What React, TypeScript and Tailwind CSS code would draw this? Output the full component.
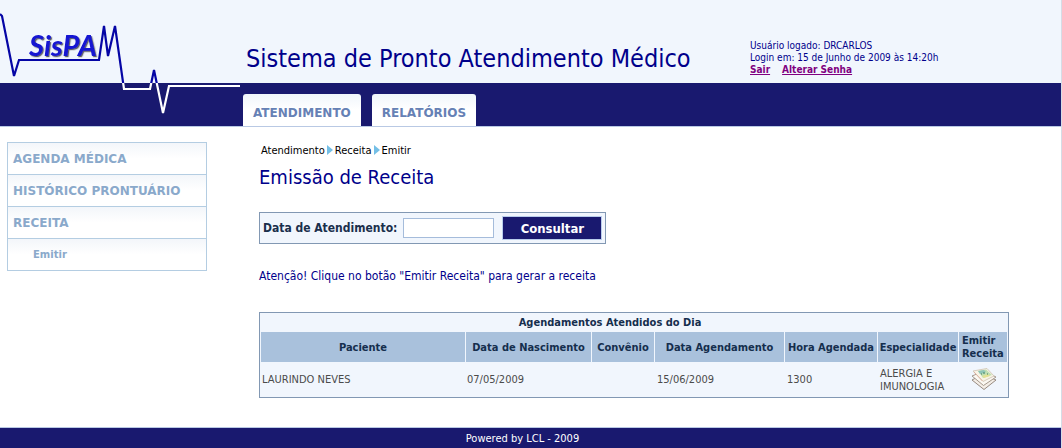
import React from "react";

const ECG_PATH =
  "M0 14 L2 16 L14 76 L19 60 H99 L104 26 L108 56 L115 26 L124 89 H150 L154 70 L163 113 L169 86 H240";

function Logo() {
  return (
    <svg
      viewBox="0 0 240 126"
      className="block h-[126px] w-60 shrink-0"
      role="img"
      aria-label="SisPA"
    >
      <defs>
        <clipPath id="logo-light">
          <rect x="0" y="0" width="240" height="83" />
        </clipPath>
        <clipPath id="logo-dark">
          <rect x="0" y="83" width="240" height="43" />
        </clipPath>
        <filter id="logo-shadow" x="-10%" y="-10%" width="130%" height="130%">
          <feDropShadow dx="1.2" dy="1.2" stdDeviation="0.7" floodColor="#222" floodOpacity="0.7" />
        </filter>
      </defs>
      <g fill="none" strokeWidth="2.2" strokeLinejoin="miter" strokeMiterlimit="2">
        <path d={ECG_PATH} stroke="#0505a5" clipPath="url(#logo-light)" />
        <path d={ECG_PATH} stroke="#ffffff" clipPath="url(#logo-dark)" />
      </g>
      <text
        x="29"
        y="56"
        fill="#1212d2"
        filter="url(#logo-shadow)"
        className="font-['Lato',sans-serif] text-[29px] font-bold italic"
      >
        SisPA
      </text>
    </svg>
  );
}

function PapersIcon() {
  return (
    <svg viewBox="0 0 26 24" className="block h-6 w-[26px]" aria-hidden="true">
      <g strokeWidth="0.9" strokeLinejoin="round">
        <path d="M2 12 L13 6 L26 12 L14 21.5 Z" fill="#f3ede6" stroke="#8c7f74" />
        <path d="M2 8 L14 3 L26 9 L13.5 17.5 Z" fill="#fbf8f2" stroke="#9c8e82" />
        <path d="M3 3 L17 0.5 L24 8 L13 13.5 Z" fill="#f8f4e6" stroke="#d3c7b8" />
      </g>
      <path d="M8 3 L16 1.5 L22 7 L13 10 Z" fill="#c0dfb2" />
      <path d="M8 3 L14 2 L16 4 L10 6 Z" fill="#8fc5b8" />
      <path d="M12 8 L18 6 L20 8 L14 10 Z" fill="#e4e294" />
      <path d="M13 5 h2 M17 6 h1 M11 6 h1" stroke="#3d7f66" strokeWidth="1" />
      <path d="M4 4 L12.5 13" stroke="#e0aa98" strokeWidth="0.8" />
    </svg>
  );
}

function Crumb() {
  return (
    <svg viewBox="0 0 6 10" className="mx-[2px] h-2.5 w-1.5 -translate-y-px" aria-hidden="true">
      <path d="M0 0 L6 5 L0 10 Z" fill="#74bfe6" />
    </svg>
  );
}

const tabs = ["ATENDIMENTO", "RELATÓRIOS"];
const menu = ["AGENDA MÉDICA", "HISTÓRICO PRONTUÁRIO", "RECEITA"];
const columns = [
  "Paciente",
  "Data de Nascimento",
  "Convênio",
  "Data Agendamento",
  "Hora Agendada",
  "Especialidade",
];

export default function App() {
  return (
    <div className="flex min-h-screen flex-col border-r border-[#d5dce6] bg-white font-['DejaVu_Sans_Condensed','DejaVu_Sans',sans-serif] text-[11px] leading-[13px]">
      <header className="flex border-b border-[#b9c9e4] bg-[linear-gradient(#f1f6fd_83px,#19196f_83px)]">
        <Logo />
        <div className="flex min-w-0 flex-1 flex-col">
          <div className="flex h-[83px] items-end text-[#00008b]">
            <h1 className="w-[510px] pb-2 pl-1.5 text-[25px] leading-8 whitespace-nowrap">
              Sistema de Pronto Atendimento Médico
            </h1>
            <div className="pb-[7px] text-[10px] leading-3 whitespace-nowrap">
              <p>Usuário logado: DRCARLOS</p>
              <p>Login em: 15 de Junho de 2009 às 14:20h</p>
              <p className="flex gap-3 font-bold text-[#800080]">
                <a href="#sair" className="underline">Sair</a>
                <a href="#senha" className="underline">Alterar Senha</a>
              </p>
            </div>
          </div>
          <nav className="flex flex-1 items-end gap-[11px] pl-[3px]">
            {tabs.map((t) => (
              <a
                key={t}
                href="#tab"
                className="flex h-8 items-center rounded-t-[3px] bg-linear-to-b from-[#f0f5fb] to-white to-50% px-[10px] pt-[7px] font-['DejaVu_Sans',sans-serif] text-[12px] font-bold text-[#6681b5]"
              >
                {t}
              </a>
            ))}
          </nav>
        </div>
      </header>

      <div className="flex flex-1 items-start">
        <aside className="mt-[15px] ml-[7px] w-50 shrink-0 border border-b-0 border-[#b4cde2] font-['DejaVu_Sans',sans-serif] font-bold text-[#8aa9cb]">
          {menu.map((m) => (
            <a
              key={m}
              href="#menu"
              className="flex h-8 items-center border-b border-[#b4cde2] bg-linear-to-b from-[#f3f6fa] to-white to-50% px-[5px] pt-px text-[12px]"
            >
              {m}
            </a>
          ))}
          <a
            href="#emitir"
            className="flex h-8 items-center border-b border-[#b4cde2] bg-linear-to-b from-[#f3f6fa] to-white to-50% pl-[25px] text-[10px]"
          >
            Emitir
          </a>
        </aside>

        <main className="ml-[52px] w-[750px] pt-[17px] pb-[29px] text-[#00008b]">
          <div className="flex items-center pl-[2px] text-black">
            Atendimento
            <Crumb />
            Receita
            <Crumb />
            Emitir
          </div>
          <h2 className="mt-2 text-[20px] leading-6">Emissão de Receita</h2>

          <form
            onSubmit={(e) => e.preventDefault()}
            className="mt-[23px] flex h-8 w-fit items-center border border-[#8298b3] bg-[#f1f6fd] px-[3px] text-[12px] font-bold text-[#1a2f4c]"
          >
            <label htmlFor="data" className="whitespace-nowrap">Data de Atendimento:</label>
            <input
              id="data"
              type="text"
              className="ml-[6px] h-5 w-[91px] border border-[#a5bcdb] bg-white px-1 font-normal"
            />
            <button type="submit" className="ml-2 h-6 w-[100px] border border-[#b9cdec] bg-[#19196f] text-[13px] text-white">
              Consultar
            </button>
          </form>

          <p className="mt-6 text-[12px] leading-4">
            Atenção! Clique no botão "Emitir Receita" para gerar a receita
          </p>

          <table className="mt-7 w-full table-fixed border-separate border-spacing-x-px border-spacing-y-0 border border-[#8298b3] bg-[#f1f6fd] text-[#4b4b4b]">
            <colgroup>
              <col className="w-[204px]" />
              <col className="w-[125px]" />
              <col className="w-[62px]" />
              <col className="w-[129px]" />
              <col className="w-[92px]" />
              <col className="w-[80px]" />
              <col className="w-12" />
            </colgroup>
            <thead className="text-[#152e4d]">
              <tr className="h-[19px]">
                <th colSpan={7} className="p-0 pr-12">Agendamentos Atendidos do Dia</th>
              </tr>
              <tr className="h-[30px] bg-white">
                {columns.map((c) => (
                  <th key={c} className="bg-[#a9c1dc] p-0 whitespace-nowrap">{c}</th>
                ))}
                <th className="bg-[#a9c1dc] p-0 pl-[3px] text-left">Emitir Receita</th>
              </tr>
            </thead>
            <tbody>
              <tr className="h-[35px]">
                <td className="p-0 pl-[1px]">LAURINDO NEVES</td>
                <td className="p-0 pl-[1px]">07/05/2009</td>
                <td className="p-0" />
                <td className="p-0 pl-[2px]">15/06/2009</td>
                <td className="p-0 pl-[2px]">1300</td>
                <td className="p-0 pl-[2px]">ALERGIA E IMUNOLOGIA</td>
                <td className="p-0">
                  <button type="button" aria-label="Emitir receita" className="mx-auto block">
                    <PapersIcon />
                  </button>
                </td>
              </tr>
            </tbody>
          </table>
        </main>
      </div>

      <footer className="border-t border-[#b9c9e4] bg-[#19196f] pt-[5px] pb-[3px] pr-4 text-center text-[11px] leading-3 text-white">
        Powered by LCL - 2009
      </footer>
    </div>
  );
}
